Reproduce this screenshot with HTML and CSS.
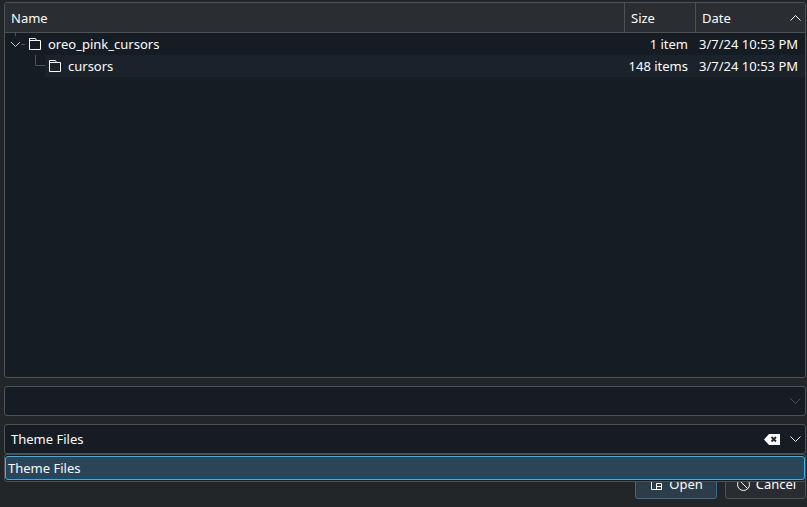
FILE: index.html
```html
<!DOCTYPE html>
<html lang="en">
<head>
<meta charset="utf-8">
<title>Open</title>
<link rel="stylesheet" href="styles.css">
</head>
<body>
<div class="dialog">
  <div class="tree">
    <div class="head">
      <div class="hcell name">Name</div>
      <div class="hcell size">Size</div>
      <div class="hcell date">Date
        <svg class="sort" width="11" height="6" viewBox="0 0 11 6"><path d="M.5 5.500l5-5 5 5" fill="none" stroke="#fcfcfc"/></svg>
      </div>
    </div>
    <div class="row">
      <svg class="branch" width="20" height="22" viewBox="0 0 20 22"><path d="M10.500 0v3M16 11.500h4" stroke="#4d5257" fill="none"/><path d="M6 9l4.500 4.500L15 9" stroke="#c8cacc" fill="none"/></svg>
      <div class="cell">
        <svg class="folder" width="12" height="12" viewBox="0 0 12 12"><path d="M.5 11.500V.5h6l1 2h4v9zM.5 2.500h7" fill="none" stroke="#fcfcfc"/></svg>
        <span class="fname">oreo_pink_cursors</span>
        <span class="fsize">1 item</span>
        <span class="fdate">3/7/24 10:53 PM</span>
      </div>
    </div>
    <div class="row">
      <svg class="branch" width="40" height="22" viewBox="0 0 40 22"><path d="M30.500 0v10.500H40" stroke="#4d5257" fill="none"/></svg>
      <div class="cell even">
        <svg class="folder" width="12" height="12" viewBox="0 0 12 12"><path d="M.5 11.500V.5h6l1 2h4v9zM.5 2.500h7" fill="none" stroke="#fcfcfc"/></svg>
        <span class="fname">cursors</span>
        <span class="fsize">148 items</span>
        <span class="fdate">3/7/24 10:53 PM</span>
      </div>
    </div>
  </div>
  <div class="combo">
    <svg class="chev" width="11" height="6" viewBox="0 0 11 6"><path d="M.5.500l5 5 5-5" fill="none" stroke="#4d5257"/></svg>
  </div>
  <div class="combo">
    <span class="ctext">Theme Files</span>
    <svg class="clear" width="16" height="11" viewBox="0 0 16 11"><path d="M0 5.500 5 0h11v11H5z" fill="#fcfcfc"/><path d="M7.500 3l4.500 4.500m0-4.500-4.500 4.500" stroke="#232629" stroke-width="1.800" fill="none"/></svg>
    <svg class="chev" width="11" height="6" viewBox="0 0 11 6"><path d="M.5.500l5 5 5-5" fill="none" stroke="#fcfcfc"/></svg>
  </div>
  <div class="buttons">
    <div class="btn primary">
      <svg width="11" height="12" viewBox="0 0 11 12"><path d="M.5 0v11.500h10V5.500h-5v6M5.500 8.500h5M6 2.500h4" fill="none" stroke="#fcfcfc"/></svg>
      <span>Open</span>
    </div>
    <div class="btn cancel">
      <svg width="13" height="13" viewBox="0 0 13 13"><circle cx="6.500" cy="6.500" r="6" fill="none" stroke="#fcfcfc"/><path d="M2.500 2.500l8 8" stroke="#fcfcfc" fill="none"/></svg>
      <span>Cancel</span>
    </div>
  </div>
</div>
<div class="popup"><div class="item">Theme Files</div></div>
</body>
</html>
```
FILE: styles.css
```css
html, body { margin: 0; padding: 0; }
body {
  width: 807px; height: 507px; overflow: hidden; position: relative;
  background: #232629; color: #fcfcfc;
  font-family: "Noto Sans", sans-serif; font-size: 13px; line-height: 18px;
}
.dialog { display: flex; flex-direction: column; padding: 2px 1px 0 4px; height: 505px; box-sizing: border-box; }
.tree {
  height: 376px; box-sizing: border-box; flex: none;
  border: 1px solid #4d5257; border-radius: 3px; background: #151c24; overflow: hidden;
}
.head { display: flex; height: 30px; background: #2a2e32; border-bottom: 1px solid #4d5257; box-sizing: border-box; }
.hcell { display: flex; align-items: center; padding-left: 6px; box-sizing: border-box; border-right: 1px solid #4d5257; }
.name { width: 620px; }
.size { width: 71px; }
.date { flex: 1; border-right: 0; justify-content: space-between; padding-right: 4px; }
.sort { display: block; }
.row { display: flex; height: 22px; }
.branch { flex: none; }
.cell { flex: 1; display: flex; align-items: center; padding-left: 4px; }
.even { background: #1a222b; }
.folder { flex: none; margin-right: 7px; }
.fname { flex: 1; }
.fsize { margin-right: 11px; }
.fdate { width: 106px; }
.combo {
  height: 30px; margin-top: 8px; box-sizing: border-box; flex: none;
  border: 1px solid #4d5257; border-radius: 3px; background: #151c24;
  display: flex; align-items: center; justify-content: flex-end; padding: 0 4px 0 6px;
}
.ctext { flex: 1; }
.clear { margin-right: 10px; }
.buttons { display: flex; justify-content: flex-end; gap: 8px; margin-top: 15px; }
.btn {
  width: 82px; height: 30px; box-sizing: border-box; border: 1px solid #4d5257; border-radius: 3px;
  background: #292c30; display: flex; align-items: center; justify-content: center; gap: 7px; padding-left: 2px;
}
.cancel { width: 81px; gap: 6px; }
.primary { background: #2d3c49; border-color: #3b6a8f; }
.popup {
  position: absolute; left: 4px; top: 454px; width: 802px; height: 28px; box-sizing: border-box;
  border: 1px solid #4d5257; border-radius: 3px; background: #151c24; padding: 1px 0;
}
.item {
  height: 24px; box-sizing: border-box; border: 1px solid #3daee9; border-radius: 3px;
  background: #2b4558; padding-left: 2px; line-height: 22px;
}
```
